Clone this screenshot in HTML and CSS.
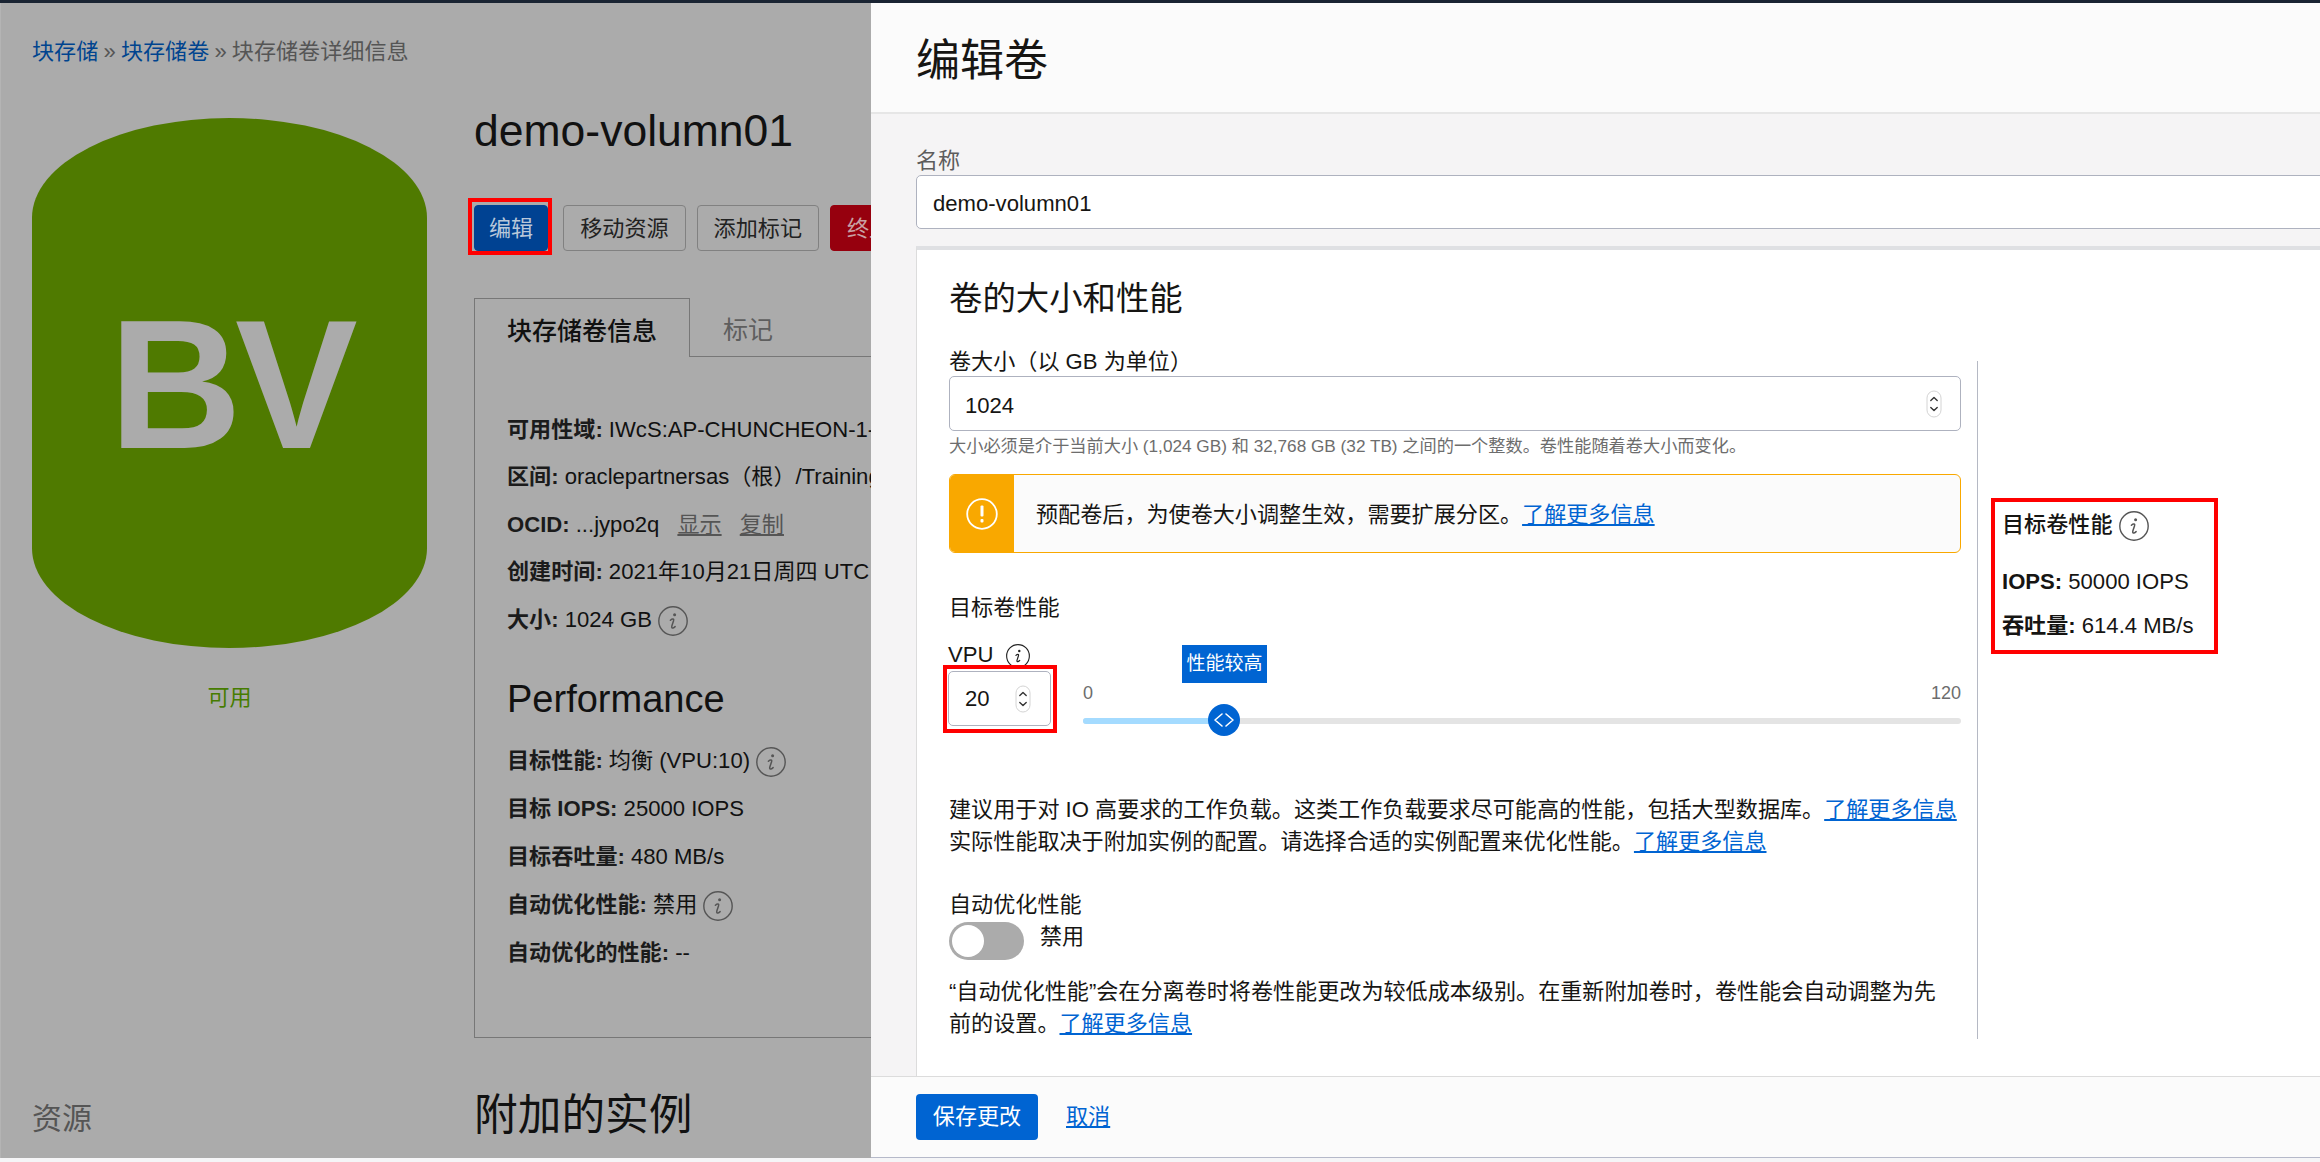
FILE: index.html
```html
<!DOCTYPE html>
<html lang="zh-CN">
<head>
    <meta charset="UTF-8">
    <meta name="viewport" content="width=device-width, initial-scale=1.0">
    <title>编辑卷</title>
    <link rel="stylesheet" href="styles.css">
</head>
<body>

    <svg class="defs" width="0" height="0" aria-hidden="true">
        <symbol id="info" viewBox="0 0 30 30">
            <circle cx="15" cy="15" r="14.200" fill="none" stroke="currentColor" stroke-width="1.400"/>
            <circle cx="16.600" cy="8.800" r="1.500" fill="currentColor"/>
            <path d="M12.400 14.200c1.100-1 2.500-1.500 3.100-1 .5.400.2 1.200-.1 2.100l-1.500 4.500c-.3 1-.4 1.700.1 2.100.7.400 2-.2 3.100-1.300" fill="none" stroke="currentColor" stroke-width="1.500" stroke-linecap="round"/>
        </symbol>
        <symbol id="spin" viewBox="0 0 16 28">
            <rect x="1" y="1" width="14" height="26" rx="7" fill="#fff" stroke="#d4d4d4" stroke-width="1"/>
            <path d="M4.800 10.500 8 7.500l3.200 3M4.800 17.500 8 20.500l3.200-3" fill="none" stroke="#333" stroke-width="1.400" stroke-linecap="round" stroke-linejoin="round"/>
        </symbol>
    </svg>

    <div class="topbar"></div>

    <div class="screen">

        <!-- pagina atras do painel -->
        <main class="page">
            <div class="crumbs"><a>块存储</a> » <a>块存储卷</a> » 块存储卷详细信息</div>

            <div class="page-row">
                <div class="page-left">
                    <div class="cylinder">BV</div>
                    <div class="state">可用</div>
                    <div class="resources">资源</div>
                </div>

                <div class="page-right">
                    <h1 class="vol-name">demo-volumn01</h1>

                    <div class="actions">
                        <button class="btn btn-primary">编辑</button>
                        <button class="btn">移动资源</button>
                        <button class="btn">添加标记</button>
                        <button class="btn btn-danger">终止</button>
                    </div>

                    <div class="tabs">
                        <div class="tab tab-active">块存储卷信息</div>
                        <div class="tab">标记</div>
                    </div>

                    <div class="tab-body">
                        <div class="info-row"><b>可用性域:</b> IWcS:AP-CHUNCHEON-1-AD-1</div>
                        <div class="info-row"><b>区间:</b> oraclepartnersas（根）/Training</div>
                        <div class="info-row"><b>OCID:</b> ...jypo2q <a class="muted-link">显示</a> <a class="muted-link">复制</a></div>
                        <div class="info-row"><b>创建时间:</b> 2021年10月21日周四 UTC</div>
                        <div class="info-row"><b>大小:</b> 1024 GB <svg class="icon-info"><use href="#info"/></svg></div>

                        <h2 class="perf-title">Performance</h2>

                        <div class="perf-row"><b>目标性能:</b> 均衡 (VPU:10) <svg class="icon-info"><use href="#info"/></svg></div>
                        <div class="perf-row"><b>目标 IOPS:</b> 25000 IOPS</div>
                        <div class="perf-row"><b>目标吞吐量:</b> 480 MB/s</div>
                        <div class="perf-row"><b>自动优化性能:</b> 禁用 <svg class="icon-info"><use href="#info"/></svg></div>
                        <div class="perf-row"><b>自动优化的性能:</b> --</div>
                    </div>

                    <h2 class="attached">附加的实例</h2>
                </div>
            </div>
        </main>

        <!-- painel de edicao -->
        <aside class="panel">
            <header class="panel-head">
                <h2>编辑卷</h2>
            </header>

            <div class="panel-body">
                <label class="name-label">名称</label>
                <div class="field field-name">demo-volumn01</div>

                <section class="card">
                    <h3 class="card-title">卷的大小和性能</h3>

                    <div class="card-row">
                        <div class="form-col">
                            <label class="lbl">卷大小（以 GB 为单位）</label>
                            <div class="field field-size">
                                1024
                                <svg class="spin"><use href="#spin"/></svg>
                            </div>
                            <p class="help">大小必须是介于当前大小 (1,024 GB) 和 32,768 GB (32 TB) 之间的一个整数。卷性能随着卷大小而变化。</p>

                            <div class="alert">
                                <div class="alert-icon">
                                    <svg width="32" height="32" viewBox="0 0 32 32">
                                        <circle cx="16" cy="16" r="14.800" fill="none" stroke="#fff" stroke-width="1.800"/>
                                        <rect x="14.500" y="7.500" width="3" height="11" rx="1" fill="#fff"/>
                                        <rect x="14.500" y="21" width="3" height="3.500" rx="1" fill="#fff"/>
                                    </svg>
                                </div>
                                <div class="alert-text">预配卷后，为使卷大小调整生效，需要扩展分区。<a class="link">了解更多信息</a></div>
                            </div>

                            <div class="lbl lbl-target">目标卷性能</div>

                            <div class="vpu-row">
                                <div class="vpu-col">
                                    <div class="vpu-label">VPU <svg class="icon-vpu"><use href="#info"/></svg></div>
                                    <div class="vpu-wrap">
                                        <div class="field field-vpu">
                                            20
                                            <svg class="spin"><use href="#spin"/></svg>
                                        </div>
                                    </div>
                                </div>
                                <div class="slider">
                                    <div class="slider-scale"><span>0</span><span>120</span></div>
                                    <div class="track"><div class="track-fill" style="width: 141px"></div></div>
                                    <div class="slider-tip">性能较高</div>
                                    <div class="thumb">
                                        <svg width="22" height="16" viewBox="0 0 22 16">
                                            <path d="M9 2 2 8l7 6M13 2l7 6-7 6" fill="none" stroke="#fff" stroke-width="1.600" stroke-linecap="round" stroke-linejoin="round"/>
                                        </svg>
                                    </div>
                                </div>
                            </div>

                            <p class="desc desc-vpu">建议用于对 IO 高要求的工作负载。这类工作负载要求尽可能高的性能，包括大型数据库。<a class="link">了解更多信息</a><br>实际性能取决于附加实例的配置。请选择合适的实例配置来优化性能。<a class="link">了解更多信息</a></p>

                            <div class="lbl lbl-auto">自动优化性能</div>
                            <div class="toggle-row">
                                <div class="toggle"><div class="toggle-knob"></div></div>
                                <span class="toggle-text">禁用</span>
                            </div>

                            <p class="desc desc-auto">“自动优化性能”会在分离卷时将卷性能更改为较低成本级别。在重新附加卷时，卷性能会自动调整为先<br>前的设置。<a class="link">了解更多信息</a></p>
                        </div>

                        <div class="divider"></div>

                        <div class="target-box">
                            <div class="target-title">目标卷性能 <svg class="icon-target"><use href="#info"/></svg></div>
                            <div class="target-row target-first"><b>IOPS:</b> 50000 IOPS</div>
                            <div class="target-row"><b>吞吐量:</b> 614.4 MB/s</div>
                        </div>
                    </div>
                </section>
            </div>

            <footer class="panel-foot">
                <button class="btn-save">保存更改</button>
                <a class="link link-cancel">取消</a>
            </footer>
        </aside>
    </div>

</body>
</html>
```

FILE: styles.css
```css
* {
    box-sizing: border-box;
}
html, body {
    margin: 0;
    height: 100%;
    overflow: hidden;
}
body {
    font-family: "Liberation Sans", "Noto Sans CJK SC", sans-serif;
    font-size: 22.1px;
    line-height: 28px;
    color: #161513;
    background-color: #f5f5f7;
}
h1, h2, h3, p {
    margin: 0;
    font-weight: 400;
}
.defs {
    position: absolute;
}
.topbar {
    height: 3px;
    background-color: #1a2433;
}
.screen {
    display: flex;
    height: 1155px;
}

/* pagina atras */
.page {
    flex: 0 0 871px;
    overflow: hidden;
    padding: 35px 0 0 31px;
    border-left: 1px solid #b4b4b4;
    background-color: #ababab;
    color: #111;
}
.crumbs {
    color: #555;
    word-spacing: -1px;
}
.crumbs a {
    color: #00448f;
}
.page-row {
    display: flex;
    margin-top: 39px;
}
.page-left {
    flex: 0 0 395px;
    padding-top: 13px;
}
.cylinder {
    height: 530px;
    padding: 174px 0 0 77px;
    border-radius: 198px / 100px;
    background-color: #4f7a00;
    color: #ababab;
    font-size: 184px;
    line-height: 184px;
    font-weight: 700;
    letter-spacing: -7px;
}
.state {
    margin-top: 36px;
    text-align: center;
    color: #467c00;
}
.resources {
    margin-top: 386px;
    font-size: 30px;
    line-height: 42px;
    color: #555;
}
.page-right {
    flex: 0 0 520px;
    margin-left: 47px;
}
.vol-name {
    font-size: 44.5px;
    line-height: 52px;
}
.actions {
    display: flex;
    gap: 11px;
    margin-top: 48px;
}
.btn {
    height: 46px;
    padding: 2px 16px 0;
    border: 1px solid #818181;
    border-radius: 4px;
    background-color: #ababab;
    color: #222;
    font: inherit;
    white-space: nowrap;
}
.btn-primary {
    position: relative;
    margin-right: 4px;
    padding: 2px 14px 0;
    border-color: #004292;
    background-color: #004292;
    color: #b9c8da;
}
.btn-primary::after {
    content: "";
    position: absolute;
    top: -8px;
    right: -5px;
    bottom: -5px;
    left: -7px;
    border: 4px solid #f00;
}
.btn-danger {
    border-color: #96000e;
    background-color: #96000e;
    color: #c9a0a4;
}
.tabs {
    display: flex;
    height: 59px;
    margin-top: 47px;
    border-bottom: 1px solid #777;
}
.tab {
    padding: 0 33px;
    font-size: 25px;
    line-height: 64px;
    color: #5e5e5e;
}
.tab-active {
    height: 59px;
    padding: 0 32px;
    border: 1px solid #777;
    border-bottom: 0;
    background-color: #ababab;
    color: #111;
    font-weight: 500;
}
.tab-body {
    height: 681px;
    padding: 49px 0 0 32px;
    border-left: 1px solid #777;
    border-bottom: 1px solid #777;
    white-space: nowrap;
}
.info-row {
    height: 47.4px;
    line-height: 47px;
}
.perf-row {
    height: 48px;
    line-height: 49px;
}
.info-row b, .perf-row b {
    font-weight: 700;
    color: #1b1b1b;
}
.muted-link {
    margin-left: 12px;
    color: #555;
    text-decoration: underline;
}
.icon-info {
    width: 30px;
    height: 30px;
    vertical-align: middle;
    color: #555;
}
.perf-title {
    margin: 31px 0 12px;
    font-size: 38px;
    line-height: 50px;
}
.attached {
    margin-top: 47px;
    font-size: 43.7px;
    line-height: 60px;
}

/* painel */
.panel {
    flex: 1;
    min-width: 0;
    display: flex;
    flex-direction: column;
    background-color: #fbfbfb;
}
.panel-head {
    flex: 0 0 111px;
    padding: 34px 0 0 45px;
    border-bottom: 2px solid #e6e6e6;
}
.panel-head h2 {
    font-size: 44px;
    line-height: 48px;
}
.panel-body {
    flex: 1;
    min-height: 0;
    overflow: hidden;
    padding: 33px 0 0 45px;
    background-color: #f5f4f5;
}
.name-label {
    display: block;
    color: #5c5c5c;
}
.field {
    position: relative;
    display: flex;
    align-items: center;
    border: 1px solid #aeb2bf;
    border-radius: 5px;
    background-color: #fff;
}
.field-name {
    width: 1500px;
    height: 54px;
    padding: 4px 0 0 16px;
}
.card {
    width: 1500px;
    height: 900px;
    margin-top: 17px;
    padding: 26px 0 0 32px;
    border-top: 4px solid #dfe0e3;
    border-left: 1px solid #dcdcdc;
    background-color: #fff;
}
.card-title {
    font-size: 33.4px;
    line-height: 46px;
}
.card-row {
    display: flex;
    margin-top: 26px;
}
.form-col {
    flex: 0 0 1012px;
}
.lbl {
    display: block;
}
.field-size {
    justify-content: space-between;
    height: 55px;
    padding: 4px 18px 0 15px;
}
.spin {
    width: 16px;
    height: 28px;
    flex: none;
    margin-top: -4px;
}
.help {
    margin-top: 3px;
    font-size: 17.2px;
    line-height: 24px;
    color: #6d6d6d;
}
.alert {
    display: flex;
    height: 79px;
    margin-top: 16px;
    border: 1.500px solid #f9a800;
    border-radius: 6px;
    background-color: #fbfbfb;
    overflow: hidden;
}
.alert-icon {
    flex: 0 0 64px;
    display: flex;
    align-items: center;
    justify-content: center;
    background-color: #f9a800;
}
.alert-text {
    padding-left: 22px;
    line-height: 80px;
}
.link {
    color: #0064d2;
    text-decoration: underline;
}
.lbl-target {
    margin-top: 41px;
}
.vpu-row {
    display: flex;
    margin-top: 20px;
}
.vpu-col {
    flex: 0 0 134px;
}
.vpu-label {
    margin-left: -1px;
    line-height: 26px;
    white-space: nowrap;
}
.icon-vpu {
    width: 24px;
    height: 24px;
    margin-left: 6px;
    vertical-align: middle;
    color: #222;
}
.vpu-wrap {
    position: relative;
    width: 103px;
    margin: 3px 0 0 -1px;
}
.vpu-wrap::after {
    content: "";
    position: absolute;
    top: -6px;
    right: -6px;
    bottom: -7px;
    left: -5px;
    border: 4px solid #f00;
}
.field-vpu {
    height: 55px;
    padding: 0 19px 0 16px;
    justify-content: space-between;
}
.field-vpu .spin {
    margin-top: 0;
}
.slider {
    position: relative;
    flex: 1;
    padding-top: 40px;
}
.slider-scale {
    display: flex;
    justify-content: space-between;
    font-size: 18px;
    line-height: 22px;
    color: #6d6d6d;
}
.track {
    height: 6px;
    margin-top: 14px;
    border-radius: 3px;
    background-color: #e4e4e4;
    overflow: hidden;
}
.track-fill {
    height: 100%;
    background-color: #a4dbff;
}
.slider-tip {
    position: absolute;
    top: 3px;
    left: 99px;
    width: 85px;
    height: 38px;
    background-color: #0064d2;
    color: #fff;
    font-size: 19px;
    line-height: 38px;
    text-align: center;
}
.thumb {
    position: absolute;
    top: 62px;
    left: 125px;
    width: 32px;
    height: 32px;
    display: flex;
    align-items: center;
    justify-content: center;
    border-radius: 50%;
    background-color: #0064d2;
}
.desc {
    line-height: 32px;
    white-space: nowrap;
}
.desc-vpu {
    margin-top: 68px;
}
.lbl-auto {
    margin-top: 33px;
}
.toggle-row {
    display: flex;
    gap: 16px;
    margin-top: 3px;
}
.toggle {
    width: 75px;
    height: 38px;
    padding: 3px;
    border-radius: 19px;
    background-color: #ababab;
}
.toggle-knob {
    width: 32px;
    height: 32px;
    border-radius: 50%;
    background-color: #fff;
}
.toggle-text {
    padding-top: 1px;
}
.desc-auto {
    margin-top: 16px;
}
.divider {
    flex: 0 0 1px;
    height: 678px;
    margin: 13px 0 0 16px;
    background-color: #b5b9c4;
}
.target-box {
    width: 227px;
    height: 156px;
    margin: 150px 0 0 13px;
    padding: 8px 0 0 7px;
    border: 4px solid #f00;
}
.target-title {
    font-weight: 500;
    line-height: 30px;
    white-space: nowrap;
}
.icon-target {
    width: 30px;
    height: 30px;
    vertical-align: middle;
    color: #555;
}
.target-row {
    margin-top: 14px;
    line-height: 30px;
    white-space: nowrap;
}
.target-first {
    margin-top: 26px;
}
.panel-foot {
    flex: 0 0 82px;
    display: flex;
    align-items: flex-start;
    padding: 17px 0 0 45px;
    border-top: 1px solid #dcdcdc;
    border-bottom: 1px solid #b5b9c9;
    background-color: #fbfbfb;
}
.btn-save {
    width: 122px;
    height: 46px;
    border: 0;
    border-radius: 4px;
    background-color: #0064d2;
    color: #fff;
    font: inherit;
}
.link-cancel {
    margin: 9px 0 0 28px;
}
```
